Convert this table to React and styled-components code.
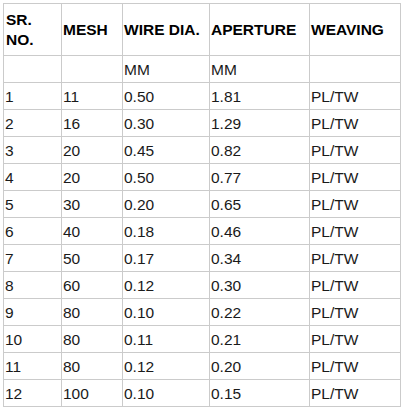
import styled, { createGlobalStyle } from "styled-components";

const ROWS = [
  ["1", "11", "0.50", "1.81"],
  ["2", "16", "0.30", "1.29"],
  ["3", "20", "0.45", "0.82"],
  ["4", "20", "0.50", "0.77"],
  ["5", "30", "0.20", "0.65"],
  ["6", "40", "0.18", "0.46"],
  ["7", "50", "0.17", "0.34"],
  ["8", "60", "0.12", "0.30"],
  ["9", "80", "0.10", "0.22"],
  ["10", "80", "0.11", "0.21"],
  ["11", "80", "0.12", "0.20"],
  ["12", "100", "0.10", "0.15"],
];

const COLS = [58, 61, 87, 100, 91];

const GlobalStyle = createGlobalStyle`
  body {
    margin: 0;
    background: #ffffff;
    font-family: "Liberation Sans", Arial, sans-serif;
  }
`;

function App() {
  return (
    <S.Wrapper>
      <GlobalStyle />
      <S.Table>
        <colgroup>
          {COLS.map((w, i) => (
            <col key={i} style={{ width: w }} />
          ))}
        </colgroup>
        <thead>
          <S.HeadRow>
            <S.Th $first>
              SR.
              <br />
              NO.
            </S.Th>
            <S.Th>MESH</S.Th>
            <S.Th>WIRE DIA.</S.Th>
            <S.Th>APERTURE</S.Th>
            <S.Th>WEAVING</S.Th>
          </S.HeadRow>
        </thead>
        <tbody>
          <S.Row>
            <S.Td $first />
            <S.Td />
            <S.Td>MM</S.Td>
            <S.Td>MM</S.Td>
            <S.Td />
          </S.Row>
          {ROWS.map((r) => (
            <S.Row key={r[0]}>
              <S.Td $first>{r[0]}</S.Td>
              <S.Td>{r[1]}</S.Td>
              <S.Td>{r[2]}</S.Td>
              <S.Td>{r[3]}</S.Td>
              <S.Td>PL/TW</S.Td>
            </S.Row>
          ))}
        </tbody>
      </S.Table>
    </S.Wrapper>
  );
}

const S = {
  Wrapper: styled.div`
    padding: 3px 0 0 3px;
  `,
  Table: styled.table`
    width: 398px;
    table-layout: fixed;
    border-collapse: separate;
    border-spacing: 0;
    border-left: 1px solid #cbcbcb;
    border-top: 1px solid #cbcbcb;
    font-size: 15.5px;
  `,
  HeadRow: styled.tr`
    height: 52px;
  `,
  Row: styled.tr`
    height: 27px;
  `,
  Th: styled.th`
    box-sizing: border-box;
    padding: 0 0 0 ${(p) => (p.$first ? "2px" : "1px")};
    border-right: 1px solid #cbcbcb;
    border-bottom: 1px solid #cbcbcb;
    text-align: left;
    vertical-align: middle;
    font-weight: 700;
    line-height: 20px;
    color: #000;
    white-space: nowrap;
  `,
  Td: styled.td`
    box-sizing: border-box;
    padding: 2px 0 0 ${(p) => (p.$first ? "1px" : "1px")};
    border-right: 1px solid #cbcbcb;
    border-bottom: 1px solid #cbcbcb;
    vertical-align: middle;
    line-height: 20px;
    color: #1a1a1a;
    white-space: nowrap;
  `,
};

export default App;
